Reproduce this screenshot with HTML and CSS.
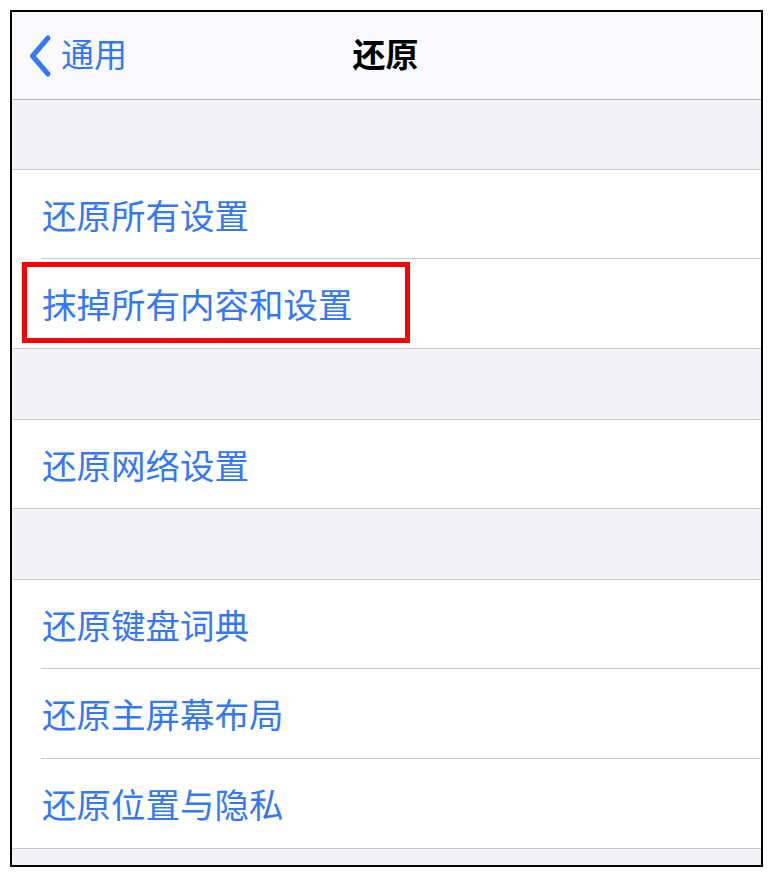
FILE: index.html
```html
<!DOCTYPE html>
<html lang="zh-CN">
<head>
    <meta charset="UTF-8">
    <title>还原</title>
    <link rel="stylesheet" href="styles.css">
</head>
<body>
<div class="screen">
    <header class="nav">
        <a class="nav-back">
            <svg class="nav-chevron" width="24" height="44" viewBox="0 0 24 44">
                <path d="M20 4 L4.5 22 L20 40" fill="none" stroke="#3478f6" stroke-width="5" stroke-linecap="round" stroke-linejoin="round"/>
            </svg>
            <span>通用</span>
        </a>
        <h1 class="nav-title">还原</h1>
    </header>

    <div class="gap gap-first"></div>
    <ul class="group">
        <li class="row"><span class="row-label">还原所有设置</span></li>
        <li class="row"><span class="row-label">抹掉所有内容和设置</span></li>
    </ul>

    <div class="gap"></div>
    <ul class="group">
        <li class="row"><span class="row-label">还原网络设置</span></li>
    </ul>

    <div class="gap"></div>
    <ul class="group">
        <li class="row"><span class="row-label">还原键盘词典</span></li>
        <li class="row"><span class="row-label">还原主屏幕布局</span></li>
        <li class="row"><span class="row-label">还原位置与隐私</span></li>
    </ul>
    <div class="gap gap-last"></div>

    <div class="highlight"></div>
</div>
</body>
</html>
```

FILE: styles.css
```css
*, ::before, ::after {
    box-sizing: border-box;
}

* {
    margin: 0;
    padding: 0;
}

body {
    background: #fff;
    font-family: "Noto Sans CJK SC", "Noto Sans", sans-serif;
}

.screen {
    position: relative;
    width: 753px;
    height: 857px;
    margin: 10px 0 0 10px;
    border: 2px solid #000;
    background: #f2f2f7;
    overflow: hidden;
}

.nav {
    position: relative;
    display: flex;
    align-items: center;
    justify-content: center;
    height: 88px;
    background: #f9f9fb;
    border-bottom: 1px solid #b4b4b8;
}

.nav-back {
    position: absolute;
    left: 16px;
    top: 0;
    bottom: 0;
    display: flex;
    align-items: center;
    gap: 9px;
    color: #3478f6;
    font-size: 33px;
    line-height: 1;
    padding-bottom: 4px;
}

.nav-chevron {
    display: block;
    margin-top: 4px;
}

.nav-title {
    font-size: 33px;
    font-weight: 600;
    color: #000;
    line-height: 1;
    margin-left: -2px;
    padding-bottom: 4px;
}

.gap {
    height: 70px;
}

.gap-first {
    height: 69px;
}

.gap-last {
    height: 16px;
}

.group {
    list-style: none;
    background: #fff;
    border-top: 1px solid #c8c7cc;
    border-bottom: 1px solid #c8c7cc;
}

.row {
    padding-left: 29px;
}

.row-label {
    display: flex;
    align-items: center;
    height: 90px;
    border-bottom: 1px solid #c8c7cc;
    color: #3478f6;
    font-size: 34.5px;
    line-height: 1;
    padding-left: 1px;
}

.row:first-child .row-label {
    height: 89px;
}

.row:last-child .row-label {
    border-bottom: none;
    height: 89px;
}

.row:first-child:last-child .row-label {
    height: 88px;
}

.highlight {
    position: absolute;
    left: 10px;
    top: 250px;
    width: 388px;
    height: 81px;
    border: 5px solid #ff0000;
}
```
